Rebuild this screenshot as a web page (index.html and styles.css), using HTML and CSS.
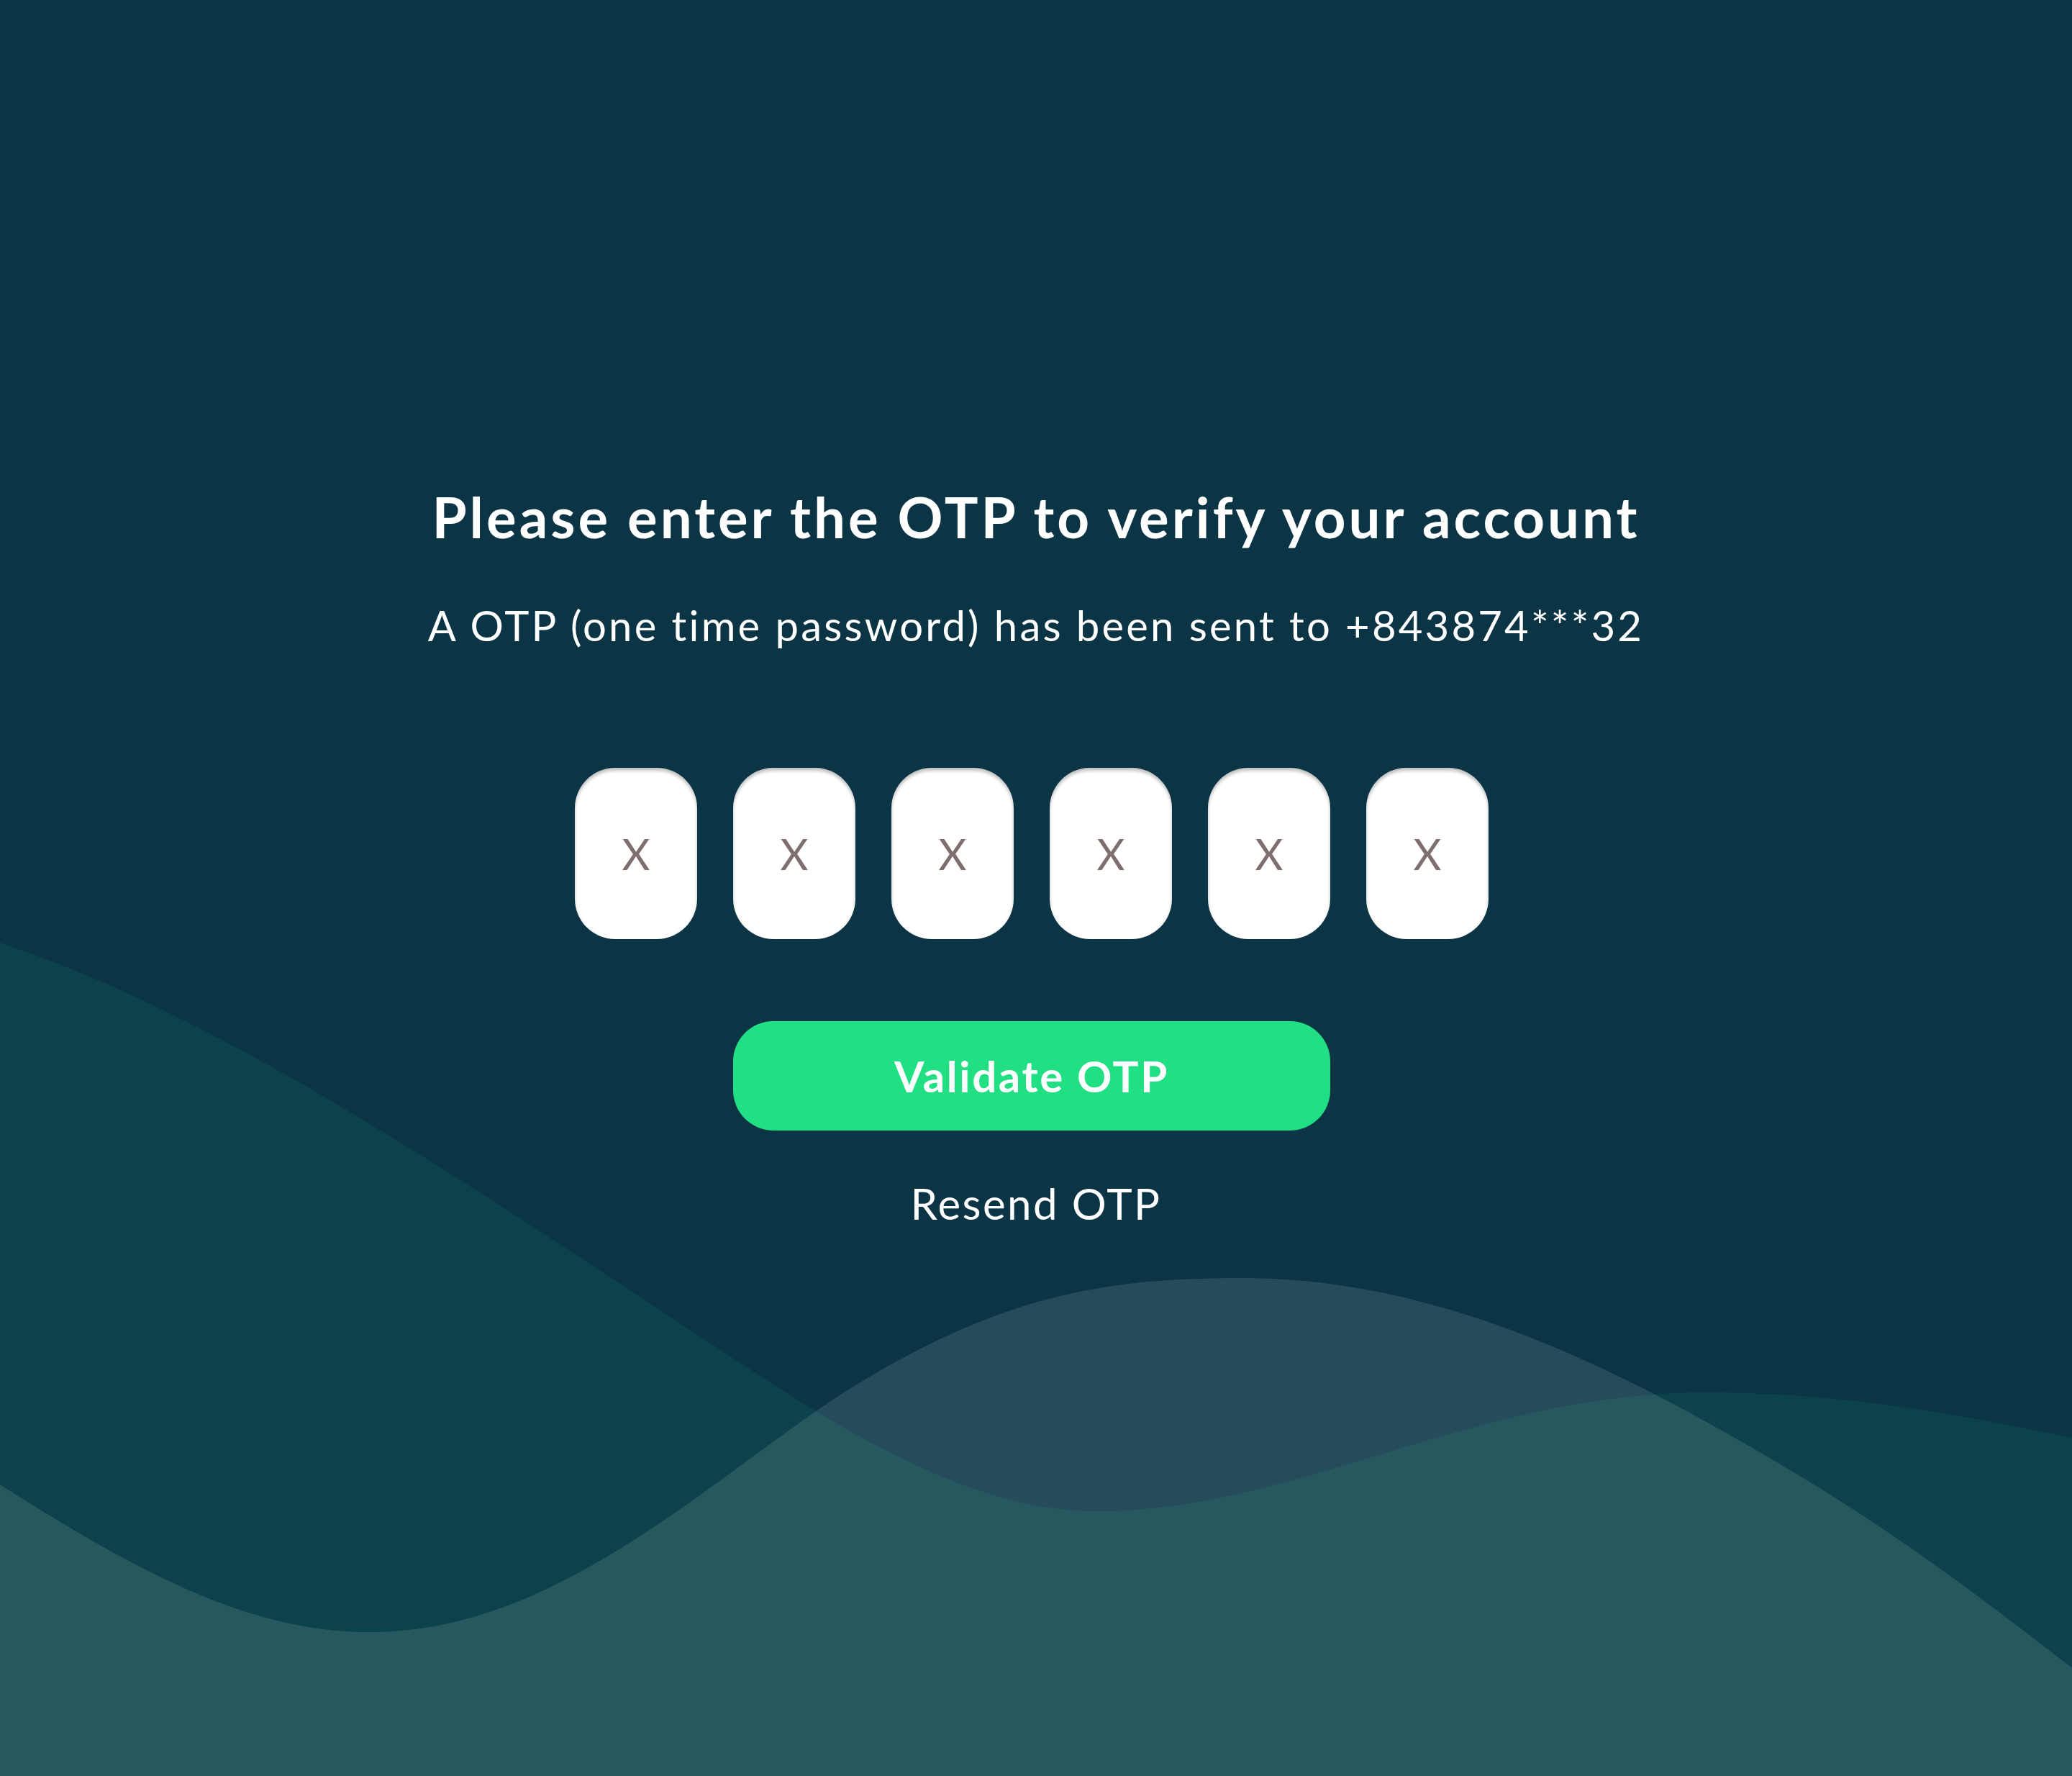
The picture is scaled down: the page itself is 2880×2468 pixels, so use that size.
FILE: index.html
```html
<!DOCTYPE html>
<html lang="en">
<head>
<meta charset="utf-8">
<title>Verify OTP</title>
<link rel="stylesheet" href="styles.css">
</head>
<body>
<div class="page">
  <svg class="waves" viewBox="0 0 2880 2468" preserveAspectRatio="none" aria-hidden="true">
    <path class="wave-a" d="M0,1310 C350,1425 750,1715 1100,1940 C1300,2065 1420,2100 1525,2100 C1800,2100 2050,1935 2370,1935 C2560,1935 2720,1965 2880,1998 L2880,2468 L0,2468 Z"/>
    <path class="wave-b" d="M0,2063 C200,2190 350,2268 514,2268 C760,2268 960,2080 1150,1950 C1380,1800 1530,1776 1727,1776 C2000,1776 2250,1900 2500,2050 C2650,2140 2780,2240 2880,2318 L2880,2468 L0,2468 Z"/>
  </svg>
  <main class="content">
    <h1 class="title">Please enter the OTP to verify your account</h1>
    <p class="subtitle">A OTP (one time password) has been sent to +843874***32</p>
    <div class="otp-row">
      <div class="otp-box">X</div>
      <div class="otp-box">X</div>
      <div class="otp-box">X</div>
      <div class="otp-box">X</div>
      <div class="otp-box">X</div>
      <div class="otp-box">X</div>
    </div>
    <button class="validate-btn" type="button">Validate OTP</button>
    <a class="resend" href="#">Resend OTP</a>
  </main>
</div>
</body>
</html>
```

FILE: styles.css
```css
html, body {
  margin: 0;
  padding: 0;
}

body {
  background: #0b3445;
  font-family: "Lato", "Open Sans", sans-serif;
  color: #ffffff;
  font-variant-ligatures: none;
}

.page {
  position: relative;
  width: 2880px;
  height: 2468px;
  overflow: hidden;
  background: #0b3445;
}

.waves {
  position: absolute;
  left: 0;
  top: 0;
  width: 2880px;
  height: 2468px;
  z-index: 0;
}

.wave-a {
  fill: #0c434b;
}

.wave-b {
  fill: rgba(255, 255, 255, 0.112);
}

.content {
  position: relative;
  z-index: 1;
  display: flex;
  flex-direction: column;
  align-items: center;
  padding-top: 672px;
}

.title {
  margin: 0;
  font-size: 78px;
  line-height: 1.2;
  font-weight: 700;
  letter-spacing: 4px;
  color: #ffffff;
}

.subtitle {
  margin: 68px 0 0;
  font-size: 58px;
  line-height: 1.2;
  font-weight: 400;
  letter-spacing: 3.2px;
  color: #ffffff;
}

.otp-row {
  display: flex;
  gap: 50px;
  margin-top: 164px;
  margin-right: 12px;
}

.otp-box {
  width: 170px;
  height: 238px;
  border-radius: 56px;
  background: #ffffff;
  box-shadow: inset 0 4px 4px rgba(0, 0, 0, 0.25);
  display: flex;
  align-items: center;
  justify-content: center;
  font-size: 60px;
  font-weight: 400;
  color: #7f6e6e;
}

.validate-btn {
  margin-top: 114px;
  margin-right: 12px;
  width: 830px;
  height: 152px;
  border: none;
  border-radius: 56px;
  background: #21e084;
  color: #ffffff;
  font-family: "Lato", "Open Sans", sans-serif;
  font-size: 60px;
  font-weight: 700;
  letter-spacing: 2.6px;
  display: flex;
  align-items: center;
  justify-content: center;
  padding: 0;
}

.resend {
  margin-top: 65px;
  font-size: 60px;
  line-height: 1.2;
  font-weight: 400;
  letter-spacing: 2.4px;
  color: #ffffff;
  text-decoration: none;
}
```
